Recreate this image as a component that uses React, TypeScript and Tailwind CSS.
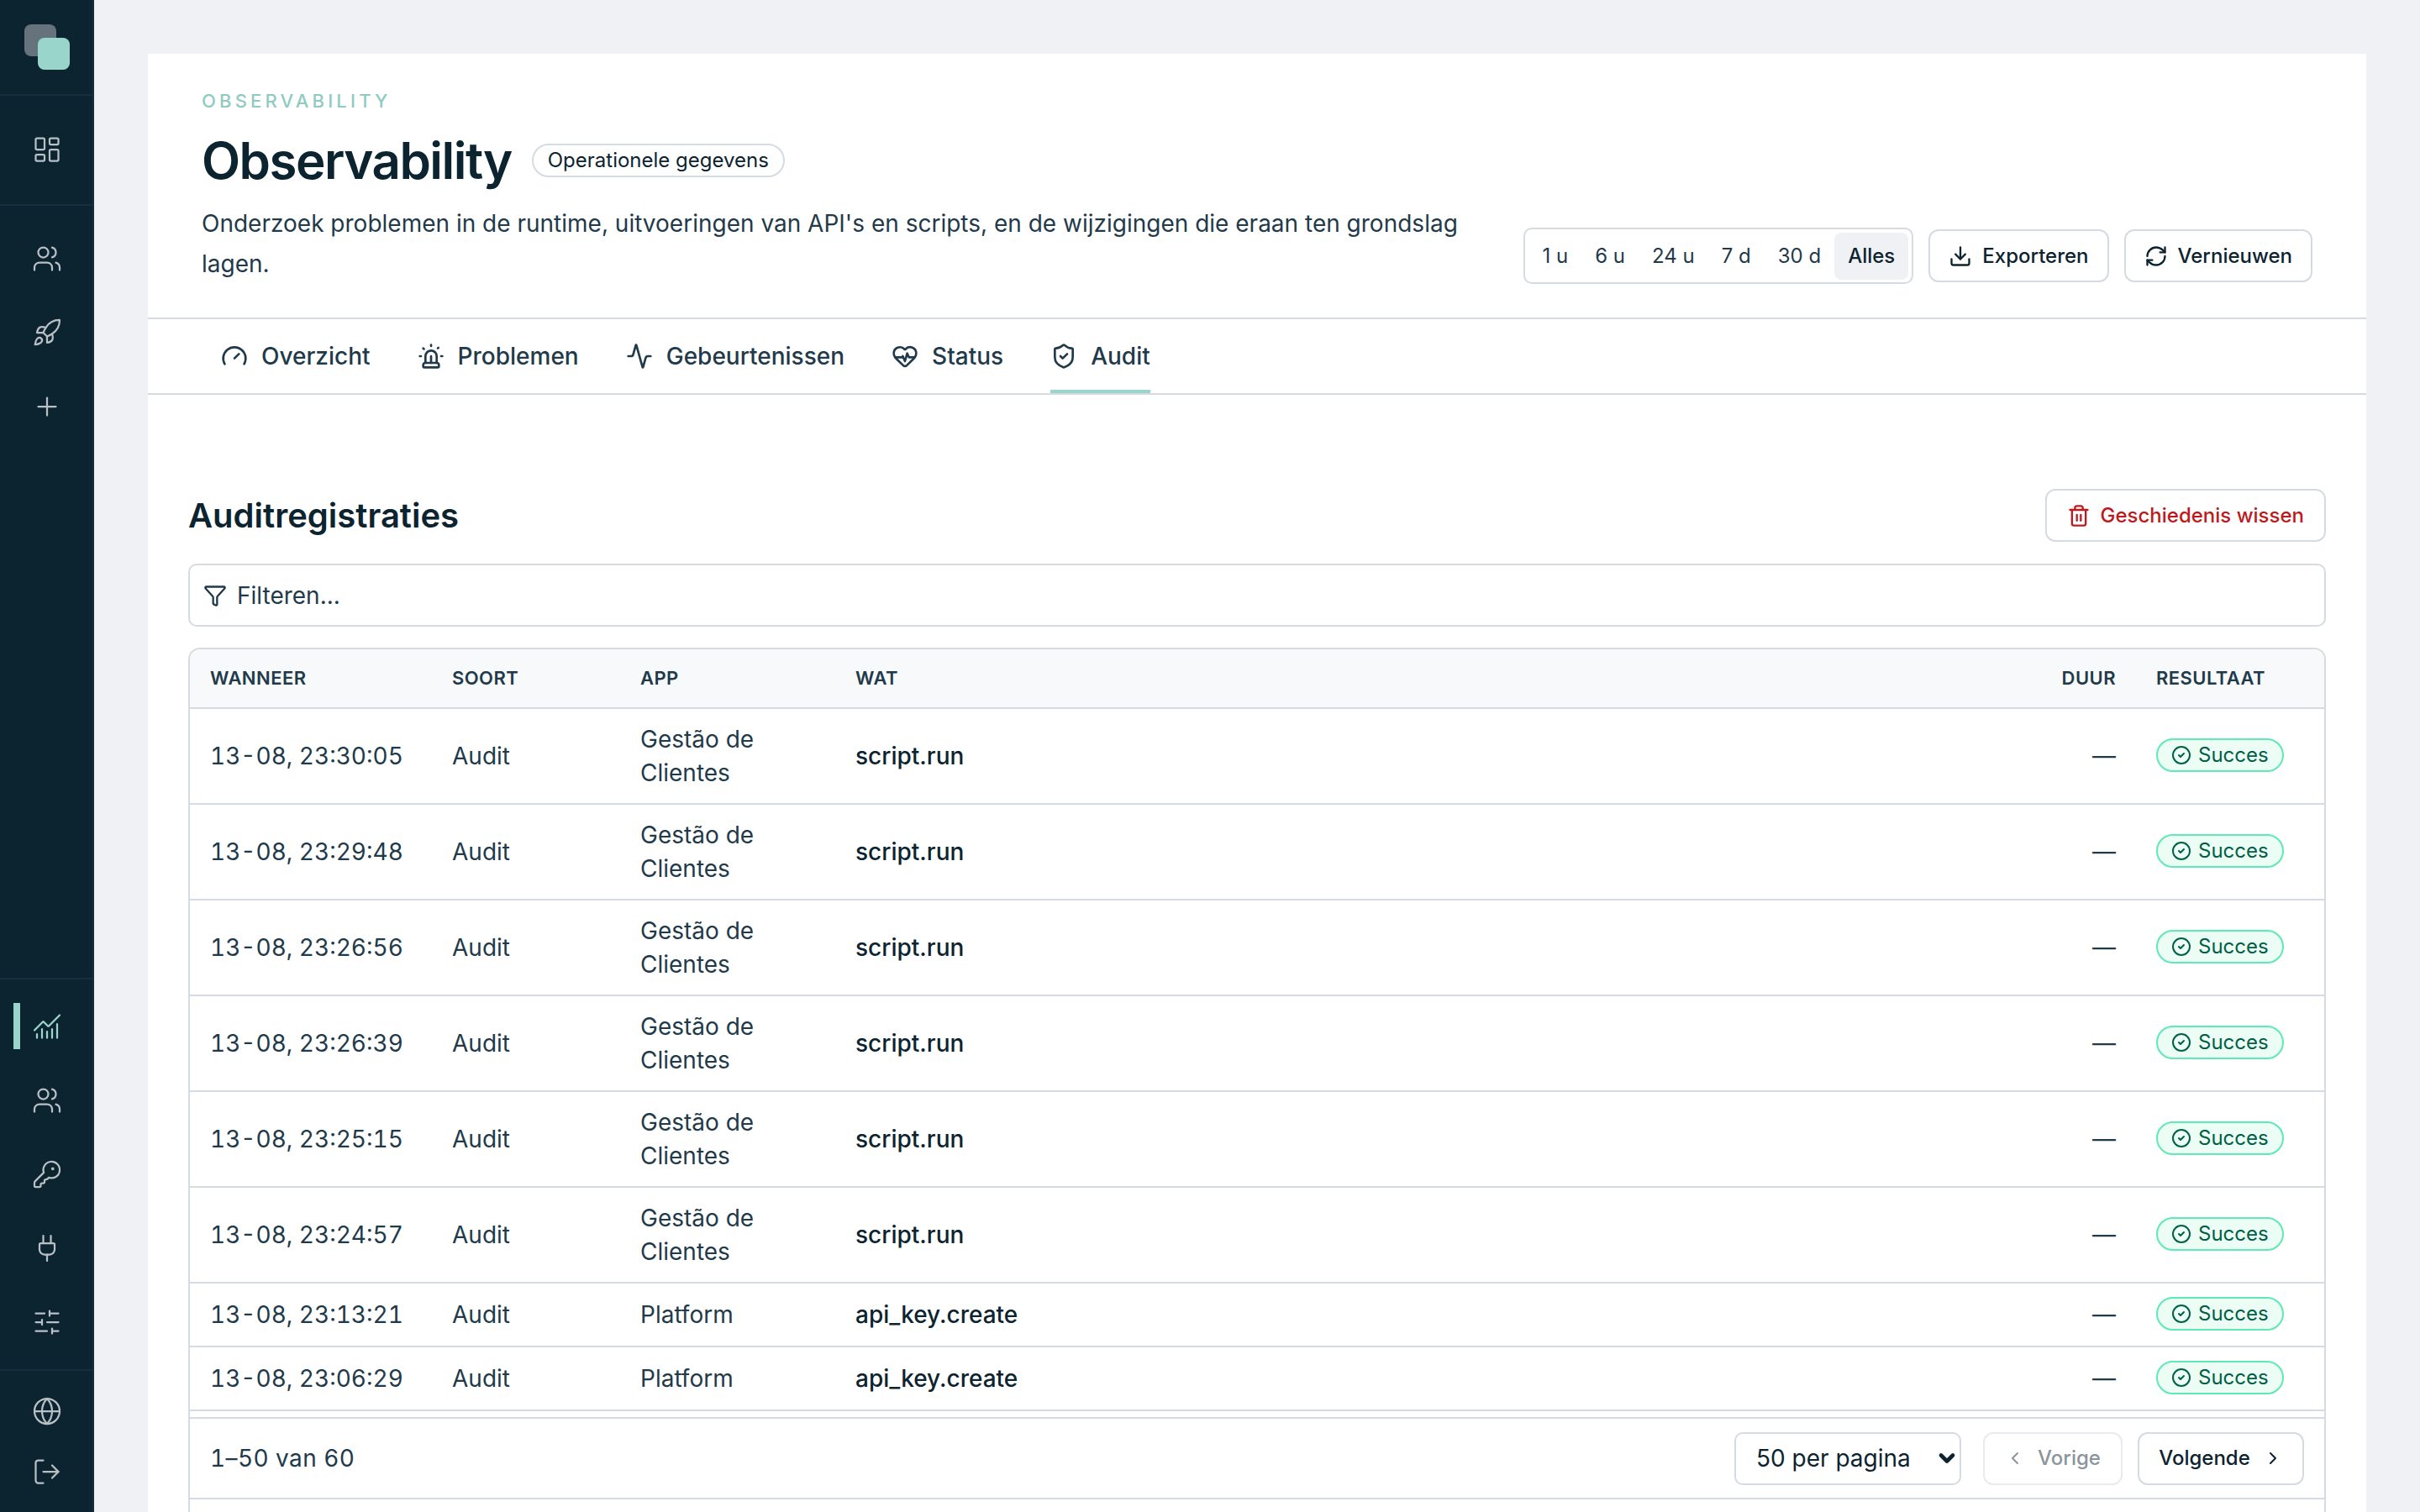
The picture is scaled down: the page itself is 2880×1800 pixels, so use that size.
import {
  Activity,
  ChartNoAxesCombined,
  ChevronDown,
  ChevronLeft,
  ChevronRight,
  CircleCheck,
  Download,
  Funnel,
  Gauge,
  Globe,
  HeartPulse,
  KeyRound,
  LayoutDashboard,
  LogOut,
  Plug,
  Plus,
  RefreshCw,
  Rocket,
  ShieldCheck,
  Siren,
  SlidersHorizontal,
  Trash2,
  Users,
} from 'lucide-react';

const ranges = ['1 u', '6 u', '24 u', '7 d', '30 d', 'Alles'];

const tabs = [
  { label: 'Overzicht', icon: Gauge },
  { label: 'Problemen', icon: Siren },
  { label: 'Gebeurtenissen', icon: Activity },
  { label: 'Status', icon: HeartPulse },
  { label: 'Audit', icon: ShieldCheck, active: true },
];

const rows = [
  { when: '13-08, 23:30:05', app: 'Gestão de Clientes', what: 'script.run' },
  { when: '13-08, 23:29:48', app: 'Gestão de Clientes', what: 'script.run' },
  { when: '13-08, 23:26:56', app: 'Gestão de Clientes', what: 'script.run' },
  { when: '13-08, 23:26:39', app: 'Gestão de Clientes', what: 'script.run' },
  { when: '13-08, 23:25:15', app: 'Gestão de Clientes', what: 'script.run' },
  { when: '13-08, 23:24:57', app: 'Gestão de Clientes', what: 'script.run' },
  { when: '13-08, 23:13:21', app: 'Platform', what: 'api_key.create' },
  { when: '13-08, 23:06:29', app: 'Platform', what: 'api_key.create' },
];

function RailButton({ icon: Icon, height = 'h-[88px]', active = false }: { icon: any; height?: string; active?: boolean }) {
  return (
    <div className={`relative flex items-center justify-center pl-[2px] ${height} ${active ? 'text-[#99d5cb]' : 'text-[#b8c0c5]'}`}>
      {active && <span className="absolute left-4 top-4 h-[55px] w-2 bg-[#99d5cb]" />}
      <Icon size={36} strokeWidth={1.5} />
    </div>
  );
}

function Sidebar() {
  return (
    <aside className="flex h-full w-[112px] shrink-0 flex-col border-r-2 border-[#14303f] bg-[#0c2330]">
      <div className="flex h-[114px] shrink-0 border-b-2 border-[#14303f] pl-[29px] pt-[29px]">
        <div className="relative h-[54px] w-[54px]">
          <div className="h-[38px] w-[38px] rounded-[8px] bg-[#66737c]" />
          <div className="absolute left-4 top-4 h-[38px] w-[38px] rounded-[8px] bg-[#99d5cb]" />
        </div>
      </div>
      <div className="flex h-[131px] shrink-0 items-center justify-center border-b-2 border-[#14303f] pb-[2px] pl-[2px]">
        <LayoutDashboard size={36} strokeWidth={1.5} className="text-[#b8c0c5]" />
      </div>
      <div className="flex-1 py-[19px]">
        <RailButton icon={Users} />
        <RailButton icon={Rocket} />
        <RailButton icon={Plus} />
      </div>
      <div className="border-t-2 border-[#14303f] py-3">
        <RailButton icon={ChartNoAxesCombined} active />
        <RailButton icon={Users} />
        <RailButton icon={KeyRound} />
        <RailButton icon={Plug} />
        <RailButton icon={SlidersHorizontal} />
      </div>
      <div className="border-t-2 border-[#14303f] py-3">
        <RailButton icon={Globe} height="h-[72px]" />
        <RailButton icon={LogOut} height="h-[72px]" />
      </div>
    </aside>
  );
}

function Header() {
  return (
    <div className="flex items-end justify-between border-b-2 border-[#d6dbe1] px-16 py-10">
      <div className="w-[1530px]">
        <p className="text-[22px] leading-8 font-medium tracking-[0.19em] text-[#8fcbc1] uppercase">Observability</p>
        <div className="mt-[19px] flex items-center gap-6">
          <h1 className="text-[60px] leading-[72px] font-semibold tracking-tight text-[#0c2330]">Observability</h1>
          <span className="flex h-10 items-center rounded-full border-2 border-[#d6dbe1] px-[17px] text-[24px] text-[#0c2330]">
            Operationele gegevens
          </span>
        </div>
        <p className="mt-[15px] text-[28px] leading-[48px] text-[#1f3a4a]">
          Onderzoek problemen in de runtime, uitvoeringen van API's en scripts, en de wijzigingen die eraan ten grondslag lagen.
        </p>
      </div>
      <div className="flex items-center gap-[18px]">
        <div className="flex h-[67px] items-center rounded-[10px] border-2 border-[#d6dbe1] p-1">
          {ranges.map(r => (
            <span
              key={r}
              className={`flex h-14 items-center rounded-[8px] px-4 text-[24px] ${
                r === 'Alles' ? 'bg-[#eff1f5] font-medium text-[#0c2330]' : 'text-[#1f3a4a]'
              }`}
            >
              {r}
            </span>
          ))}
        </div>
        <button className="flex h-[63px] items-center gap-3 rounded-[12px] border-2 border-[#d6dbe1] bg-white px-[22px] text-[24px] font-medium text-[#0c2330]">
          <Download size={28} strokeWidth={2} />
          Exporteren
        </button>
        <button className="flex h-[63px] items-center gap-3 rounded-[12px] border-2 border-[#d6dbe1] bg-white px-[22px] text-[24px] font-medium text-[#0c2330]">
          <RefreshCw size={28} strokeWidth={2} />
          Vernieuwen
        </button>
      </div>
    </div>
  );
}

function Tabs() {
  return (
    <div className="flex h-[90px] gap-14 border-b-2 border-[#d6dbe1] pl-[87px]">
      {tabs.map(t => (
        <div
          key={t.label}
          className={`flex items-center gap-4 border-y-4 border-t-transparent text-[28px] font-medium text-[#1f3a4a] ${
            t.active ? 'border-b-[#99d5cb] text-[#0c2330]' : 'border-b-transparent'
          }`}
        >
          <t.icon size={32} strokeWidth={2} />
          {t.label}
        </div>
      ))}
    </div>
  );
}

function AuditTable() {
  return (
    <div className="h-[1200px] overflow-hidden rounded-[14px] border-2 border-[#d6dbe1]">
      <div className="h-[914px] overflow-hidden">
        <table className="w-full table-fixed border-separate border-spacing-0">
          <thead>
            <tr className="bg-[#f8f9fb] text-left text-[22px] font-semibold tracking-[0.02em] text-[#1f3a4a] uppercase">
              <th className="h-[71px] w-[288px] border-b-2 border-[#d6dbe1] px-6 font-semibold">Wanneer</th>
              <th className="w-[224px] border-b-2 border-[#d6dbe1] px-6 font-semibold">Soort</th>
              <th className="w-[256px] border-b-2 border-[#d6dbe1] px-6 font-semibold">App</th>
              <th className="border-b-2 border-[#d6dbe1] px-6 font-semibold">Wat</th>
              <th className="w-[120px] border-b-2 border-[#d6dbe1] px-6 text-right font-semibold">Duur</th>
              <th className="w-[224px] border-b-2 border-[#d6dbe1] px-6 font-semibold">Resultaat</th>
            </tr>
          </thead>
          <tbody className="text-[28px] leading-10 text-[#1f3a4a]">
            {rows.map(row => (
              <tr key={row.when}>
                <td className="h-[76px] border-b-2 border-[#d6dbe1] px-6 py-4 tabular-nums whitespace-nowrap">{row.when}</td>
                <td className="border-b-2 border-[#d6dbe1] px-6 py-4">Audit</td>
                <td className="border-b-2 border-[#d6dbe1] px-6 py-4">{row.app}</td>
                <td className="border-b-2 border-[#d6dbe1] px-6 py-4 font-medium text-[#0c2330]">{row.what}</td>
                <td className="border-b-2 border-[#d6dbe1] px-6 py-4 text-right">—</td>
                <td className="border-b-2 border-[#d6dbe1] px-6 py-0 align-middle">
                  <span className="inline-flex h-10 items-center gap-2 rounded-full border-2 border-[#5ee9b5] bg-[#ecfdf5] px-4 text-[24px] text-[#006045]">
                    <CircleCheck size={24} strokeWidth={2} />
                    Succes
                  </span>
                </td>
              </tr>
            ))}
          </tbody>
        </table>
      </div>
      <div className="flex h-[98px] items-center justify-between border-y-2 border-[#d6dbe1] px-6">
        <span className="text-[28px] tracking-[0.015em] text-[#1f3a4a] tabular-nums">1–50 van 60</span>
        <div className="flex items-center">
          <div className="relative">
            <select className="h-[63px] w-[270px] appearance-none rounded-[10px] border-2 border-[#d6dbe1] bg-white pl-6 text-[28px] text-[#0c2330]">
              <option>50 per pagina</option>
              <option>100 per pagina</option>
            </select>
            <ChevronDown size={28} strokeWidth={4} className="pointer-events-none absolute right-[3px] top-[17px] text-[#0c2330]" />
          </div>
          <button disabled className="ml-[26px] flex h-[63px] w-[166px] items-center justify-center gap-[15px] rounded-[12px] border-2 border-[#e8ebef] bg-white text-[24px] font-medium text-[#8a959e]">
            <ChevronLeft size={24} strokeWidth={2} />
            Vorige
          </button>
          <button className="ml-[18px] flex h-[63px] w-[198px] items-center justify-center gap-[15px] rounded-[12px] border-2 border-[#d6dbe1] bg-white text-[24px] font-medium text-[#0c2330]">
            Volgende
            <ChevronRight size={24} strokeWidth={2} />
          </button>
        </div>
      </div>
    </div>
  );
}

export default function App() {
  return (
    <div className="flex h-screen overflow-hidden bg-[#eff1f5] font-[Inter,sans-serif]">
      <Sidebar />
      <main className="flex-1 px-16 pt-16">
        <div className="h-[1800px] bg-white">
          <Header />
          <Tabs />
          <section className="px-12 pt-[112px]">
            <div className="mb-[26px] flex items-center justify-between">
              <h2 className="text-[40px] font-semibold text-[#0c2330]">Auditregistraties</h2>
              <button className="flex h-[63px] items-center gap-3 rounded-[12px] border-2 border-[#d6dbe1] bg-white px-[24px] text-[24px] font-medium text-[#bd1a20]">
                <Trash2 size={28} strokeWidth={2} />
                Geschiedenis wissen
              </button>
            </div>
            <div className="mb-[25px] flex h-[75px] items-center gap-3 rounded-[10px] border-2 border-[#d6dbe1] px-4 text-[28px] text-[#1f3a4a]">
              <Funnel size={28} strokeWidth={2} />
              <span>Filteren...</span>
            </div>
            <AuditTable />
          </section>
        </div>
      </main>
    </div>
  );
}
